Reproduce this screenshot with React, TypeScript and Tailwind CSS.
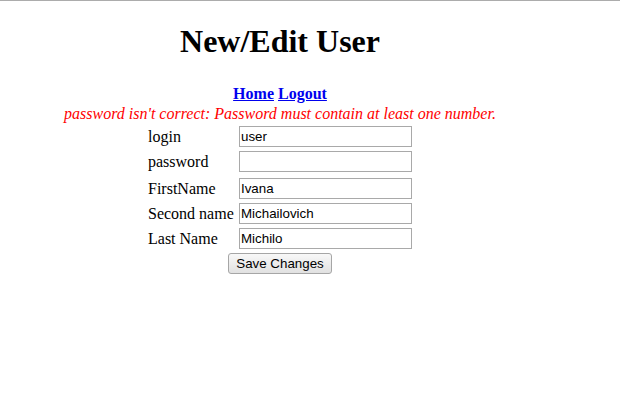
import React from "react";

const rows: { label: string; value: string; type: string; mt: string }[] = [
  { label: "login", value: "user", type: "text", mt: "mt-0" },
  { label: "password", value: "", type: "password", mt: "mt-[4px]" },
  { label: "FirstName", value: "Ivana", type: "text", mt: "mt-[6px]" },
  { label: "Second name", value: "Michailovich", type: "text", mt: "mt-[4px]" },
  { label: "Last Name", value: "Michilo", type: "text", mt: "mt-[4px]" },
];

export default function App() {
  return (
    <div className="min-h-[401px] border-t border-[#acacac] bg-white font-['Liberation_Serif',serif] text-black">
      <div className="w-[560px] text-center">
        <h1 className="mt-[23px] text-[32px] font-bold leading-[35px]">New/Edit User</h1>
        <div className="mt-[25px] text-[16px] font-bold leading-[20px]">
          <a href="#" className="text-[#0000ee] underline">Home</a>{" "}
          <a href="#" className="text-[#0000ee] underline">Logout</a>
        </div>
        <div className="mt-0 text-[16px] italic leading-[20px] text-[#ff0000]">
          password isn't correct: Password must contain at least one number.
        </div>
        <form className="mx-auto mt-[2px] flex w-[264px] flex-col text-left">
          {rows.map((r) => (
            <div key={r.label} className={`flex h-[21px] items-center ${r.mt}`}>
              <span className="w-[91px] whitespace-nowrap text-[16px] leading-[18px]">{r.label}</span>
              <input
                type={r.type}
                defaultValue={r.value}
                className="h-[21px] w-[173px] border border-[#a9a9a9] bg-white px-[1px] font-['Liberation_Sans',Arial,sans-serif] text-[13.33px] text-black outline-none"
              />
            </div>
          ))}
          <div className="mt-[4px] flex justify-center">
            <button
              type="button"
              className="h-[21px] w-[104px] rounded-[3px] border border-[#a6a6a6] bg-gradient-to-b from-[#f8f8f8] to-[#e1e1e1] font-['Liberation_Sans',Arial,sans-serif] text-[13.33px] leading-[19px] text-black"
            >
              Save Changes
            </button>
          </div>
        </form>
      </div>
    </div>
  );
}
